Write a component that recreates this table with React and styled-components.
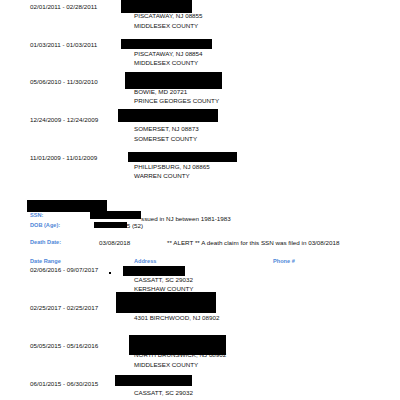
import React from 'react'
import styled, { createGlobalStyle } from 'styled-components'

const GlobalStyle = createGlobalStyle`
html, body {
  margin: 0;
  padding: 0;
  background: #fff;
  overflow: hidden;
}
body {
  font-family: "Liberation Sans", Arial, sans-serif;
  color: #111;
}
`;

const upper = [
  { date: '02/01/2011 - 02/28/2011', lines: ['PISCATAWAY, NJ 08855', 'MIDDLESEX COUNTY'], bar: { x: 121, y: -2, w: 71, h: 13 } },
  { date: '01/03/2011 - 01/03/2011', lines: ['PISCATAWAY, NJ 08854', 'MIDDLESEX COUNTY'], bar: { x: 121, y: -1, w: 91, h: 10 } },
  { date: '05/06/2010 - 11/30/2010', lines: ['BOWIE, MD 20721', 'PRINCE GEORGES COUNTY'], bar: { x: 125, y: -5.3, w: 97, h: 17 } },
  { date: '12/24/2009 - 12/24/2009', lines: ['SOMERSET, NJ 08873', 'SOMERSET COUNTY'], bar: { x: 118, y: -6.4, w: 99.5, h: 13 } },
  { date: '11/01/2009 - 11/01/2009', lines: ['PHILLIPSBURG, NJ 08865', 'WARREN COUNTY'], bar: { x: 128, y: -0.9, w: 108.5, h: 10 } },
];

const lower = [
  { date: '02/06/2016 - 09/07/2017', lines: ['CASSATT, SC 29032', 'KERSHAW COUNTY'], bar: { x: 122.5, y: 0.4, w: 62, h: 10.3 }, speck: true },
  { date: '02/25/2017 - 02/25/2017', lines: ['4301 BIRCHWOOD, NJ 08902'], bar: { x: 115.5, y: -10.9, w: 100.8, h: 21 } },
  { date: '05/05/2015 - 05/16/2016', lines: ['NORTH BRUNSWICK, NJ 08902', 'MIDDLESEX COUNTY'], bar: { x: 129.3, y: -6.4, w: 96.7, h: 20 } },
  { date: '06/01/2015 - 06/30/2015', lines: ['CASSATT, SC 29032', 'KERSHAW COUNTY'], bar: { x: 115, y: -4.3, w: 77.3, h: 11.3 } },
];

function Record({ item, pitch }) {
  const { x, y, w, h } = item.bar
  return (
    <Row $pitch={pitch}>
      <DateCell>{item.date}</DateCell>
      <AddressCol>
        <Line>&nbsp;</Line>
        {item.lines.map((l) => <Line key={l}>{l}</Line>)}
      </AddressCol>
      <Redaction style={{ left: x, top: y, width: w, height: h }} />
      {item.speck && <Speck />}
    </Row>
  )
}

export default function App() {
  return (
    <Page>
      <GlobalStyle />
      <List>
        {upper.map((r) => <Record key={r.date} item={r} pitch={37.65} />)}
      </List>

      <Person>
        <NameBar />
        <InfoRow $first>
          <Label>SSN:</Label>
          <Value><Mark $w={50.7} $h={8} $ml={-8.7} $lift={1.6} />ssued in NJ between 1981-1983</Value>
        </InfoRow>
        <InfoRow>
          <Label>DOB (Age):</Label>
          <Value><Mark $w={32.5} $h={5.8} $ml={-4.7} $lift={0} />5 (52)</Value>
        </InfoRow>
        <DeathRow>
          <Label>Death Date:</Label>
          <DeathValue>03/08/2018</DeathValue>
          <Alert>** ALERT ** A death claim for this SSN was filed in 03/08/2018</Alert>
        </DeathRow>
        <Header>
          <Label>Date Range</Label>
          <Label>Address</Label>
          <Label>Phone #</Label>
        </Header>
      </Person>

      <List $shift={-1.1}>
        {lower.map((r) => <Record key={r.date} item={r} pitch={37.9} />)}
      </List>
    </Page>
  )
}

const Page = styled.div`
width: 400px;
height: 400px;
padding-top: 2px;
box-sizing: border-box;
overflow: hidden;
`;

const List = styled.div`
display: flex;
flex-direction: column;
margin-top: ${(p) => p.$shift || 0}px;
`;

const Row = styled.div`
position: relative;
height: ${(p) => p.$pitch}px;
display: flex;
padding-left: 30px;
font-size: 6.25px;
line-height: 9.4px;
`;

const DateCell = styled.div`
width: 104px;
flex-shrink: 0;
white-space: nowrap;
`;

const AddressCol = styled.div`
display: flex;
flex-direction: column;
`;

const Line = styled.div`
white-space: nowrap;
`;

const Redaction = styled.div`
position: absolute;
background: #000;
`;

const Speck = styled.div`
position: absolute;
left: 109px;
top: 6.3px;
width: 2px;
height: 2.6px;
background: #000;
`;

const Person = styled.div`
display: flex;
flex-direction: column;
padding-top: 9.45px;
`;

const NameBar = styled.div`
margin-left: 27px;
width: 80px;
height: 12.6px;
background: #000;
`;

const InfoRow = styled.div`
display: grid;
grid-template-columns: 69px auto;
padding-left: 30px;
height: 9.5px;
line-height: 9.5px;
margin-top: ${(p) => (p.$first ? '-1.1px' : '0')};
`;

const Label = styled.div`
color: #4f87d8;
font-size: 5.6px;
font-weight: bold;
white-space: nowrap;
`;

const Value = styled.div`
font-size: 6.25px;
white-space: nowrap;
`;

const Mark = styled.span`
display: inline-block;
width: ${(p) => p.$w}px;
height: ${(p) => p.$h}px;
margin-left: ${(p) => p.$ml}px;
vertical-align: ${(p) => p.$lift}px;
background: #000;
`;

const DeathRow = styled.div`
display: grid;
grid-template-columns: 69px 68px auto;
padding-left: 30px;
margin-top: 8.05px;
height: 9.5px;
line-height: 9.5px;
`;

const DeathValue = styled.div`
font-size: 6.25px;
`;

const Alert = styled.div`
font-size: 6.25px;
white-space: nowrap;
`;

const Header = styled.div`
display: grid;
grid-template-columns: 104px 139px auto;
padding-left: 30px;
margin-top: 9.25px;
height: 9.4px;
line-height: 9.4px;
`;
